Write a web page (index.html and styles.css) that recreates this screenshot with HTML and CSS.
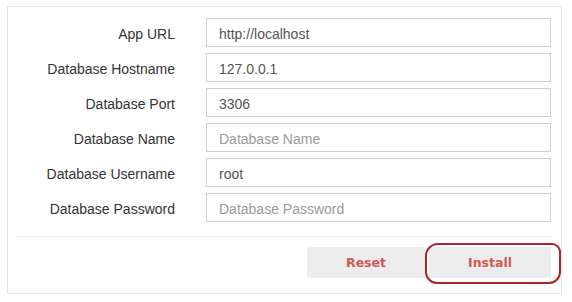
FILE: index.html
```html
<!DOCTYPE html>
<html lang="en">
<head>
<meta charset="UTF-8">
<title>Installer</title>
<link rel="stylesheet" href="styles.css">
</head>
<body>

<!-- Install form -->
<div class="panel">
    <form class="install-form">
        <div class="row">
            <label>App URL</label>
            <input type="text" value="http://localhost">
        </div>
        <div class="row">
            <label>Database Hostname</label>
            <input type="text" value="127.0.0.1">
        </div>
        <div class="row">
            <label>Database Port</label>
            <input type="text" value="3306">
        </div>
        <div class="row">
            <label>Database Name</label>
            <input type="text" placeholder="Database Name">
        </div>
        <div class="row">
            <label>Database Username</label>
            <input type="text" value="root">
        </div>
        <div class="row">
            <label>Database Password</label>
            <input type="password" placeholder="Database Password">
        </div>

        <div class="actions">
            <button type="reset" class="btn">Reset</button>
            <button type="button" class="btn btn-install">Install<span class="mark"></span></button>
        </div>
    </form>
</div>

</body>
</html>
```

FILE: styles.css
```css
body {
    margin: 0;
    background: #fff;
    font-family: "Liberation Sans", Arial, sans-serif;
    color: #333;
}

.panel {
    margin: 6px 0 0 7px;
    width: 555px;
    height: 288px;
    box-sizing: border-box;
    border: 1px solid #e6e6e6;
    padding: 11px 10px 0 9px;
}

.row {
    display: grid;
    grid-template-columns: 158px 1fr;
    column-gap: 31px;
    align-items: center;
    margin-bottom: 6px;
}

.row label {
    text-align: right;
    padding-top: 3px;
    font-size: 14px;
    color: #333;
}

.row input {
    height: 29px;
    box-sizing: border-box;
    border: 1px solid #cfcfcf;
    padding: 2px 12px 0;
    font-family: "Liberation Sans", Arial, sans-serif;
    font-size: 14px;
    color: #555;
    outline: none;
}

.row input::placeholder {
    color: #9a9a9a;
}

.actions {
    border-top: 1px solid #ebebeb;
    margin-top: 14px;
    padding-top: 10px;
    display: flex;
    justify-content: flex-end;
    gap: 4px;
}

.btn {
    width: 118px;
    height: 31px;
    border: none;
    background: #ececec;
    color: #cf5a53;
    font-family: "DejaVu Sans", Verdana, sans-serif;
    font-weight: bold;
    font-size: 12.5px;
    cursor: pointer;
}

.btn-install {
    position: relative;
    width: 122px;
}

/* hand drawn highlight around the install button */
.mark {
    position: absolute;
    left: -4px;
    right: -10px;
    top: -4px;
    bottom: -6px;
    border: 2.5px solid #ad2129;
    border-radius: 13px 9px 12px 12px;
}
```
